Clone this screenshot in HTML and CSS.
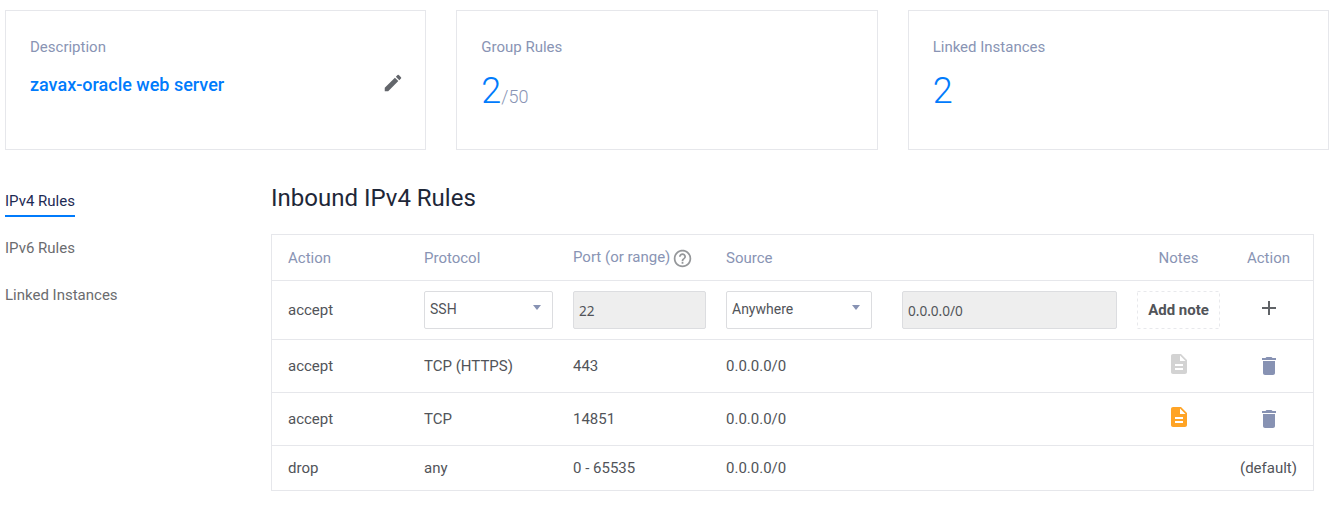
FILE: index.html
```html
<!DOCTYPE html>
<html lang="en">
<head>
<meta charset="utf-8">
<title>Firewall group</title>
<link rel="stylesheet" href="styles.css">
</head>
<body>
<section class="cards">
  <div class="card">
    <div class="label">Description</div>
    <div class="desc-row"><span class="desc">zavax-oracle web server</span>
      <svg class="edit" viewBox="0 0 24 24"><path d="M3 17.25V21h3.75L17.81 9.94l-3.75-3.75L3 17.25zM20.71 7.04a1 1 0 0 0 0-1.41l-2.34-2.34a1 1 0 0 0-1.41 0l-1.83 1.83 3.75 3.75 1.83-1.83z"/></svg>
    </div>
  </div>
  <div class="card">
    <div class="label">Group Rules</div>
    <div class="stat">2<span class="total">/50</span></div>
  </div>
  <div class="card">
    <div class="label">Linked Instances</div>
    <div class="stat">2</div>
  </div>
</section>
<div class="content">
  <nav class="side">
    <a class="active">IPv4 Rules</a>
    <a>IPv6 Rules</a>
    <a>Linked Instances</a>
  </nav>
  <main class="main">
    <h1>Inbound IPv4 Rules</h1>
    <div class="table">
      <div class="row head">
        <span>Action</span><span>Protocol</span>
        <span class="port">Port (or range)<svg class="help" viewBox="0 0 24 24"><path d="M11 18h2v-2h-2v2zm1-16C6.48 2 2 6.48 2 12s4.48 10 10 10 10-4.48 10-10S17.52 2 12 2zm0 18c-4.41 0-8-3.59-8-8s3.59-8 8-8 8 3.59 8 8-3.59 8-8 8zm0-14c-2.21 0-4 1.79-4 4h2c0-1.1.9-2 2-2s2 .9 2 2c0 2-3 1.75-3 5h2c0-2.25 3-2.5 3-5 0-2.21-1.79-4-4-4z"/></svg></span>
        <span>Source</span><span></span><span class="center">Notes</span><span class="center">Action</span>
      </div>
      <div class="row form">
        <span>accept</span>
        <div class="field select protocol">SSH<i class="caret"></i></div>
        <div class="field input port-input">22</div>
        <div class="field select source">Anywhere<i class="caret"></i></div>
        <div class="field input address">0.0.0.0/0</div>
        <div class="add-note"><svg class="dash"><rect x="0.5" y="0.5" width="82" height="37"/></svg>Add note</div>
        <svg class="icon plus" viewBox="0 0 24 24"><path d="M19 13h-6v6h-2v-6H5v-2h6V5h2v6h6v2z"/></svg>
      </div>
      <div class="row rule">
        <span>accept</span><span>TCP (HTTPS)</span><span>443</span><span>0.0.0.0/0</span><span></span>
        <svg class="icon note" viewBox="0 0 24 24"><path d="M14 2H6c-1.1 0-1.99.9-1.99 2L4 20c0 1.1.89 2 1.99 2H18c1.1 0 2-.9 2-2V8l-6-6zm2 16H8v-2h8v2zm0-4H8v-2h8v2zm-3-5V3.5L18.5 9H13z"/></svg>
        <svg class="icon trash" viewBox="0 0 24 24"><path d="M6 19c0 1.1.9 2 2 2h8c1.1 0 2-.9 2-2V7H6v12zM19 4h-3.5l-1-1h-5l-1 1H5v2h14V4z"/></svg>
      </div>
      <div class="row rule">
        <span>accept</span><span>TCP</span><span>14851</span><span>0.0.0.0/0</span><span></span>
        <svg class="icon note filled" viewBox="0 0 24 24"><path d="M14 2H6c-1.1 0-1.99.9-1.99 2L4 20c0 1.1.89 2 1.99 2H18c1.1 0 2-.9 2-2V8l-6-6zm2 16H8v-2h8v2zm0-4H8v-2h8v2zm-3-5V3.5L18.5 9H13z"/></svg>
        <svg class="icon trash" viewBox="0 0 24 24"><path d="M6 19c0 1.1.9 2 2 2h8c1.1 0 2-.9 2-2V7H6v12zM19 4h-3.5l-1-1h-5l-1 1H5v2h14V4z"/></svg>
      </div>
      <div class="row last">
        <span>drop</span><span>any</span><span>0 - 65535</span><span>0.0.0.0/0</span><span></span><span></span><span class="center">(default)</span>
      </div>
    </div>
  </main>
</div>
</body>
</html>
```
FILE: styles.css
```css
* { box-sizing: border-box; }
body { margin: 0; padding: 10px 8px 0 5px; background: #fff; color: #515459; font: 15px/20px Roboto, sans-serif; }
svg { display: block; flex: none; }
.cards { display: grid; grid-template-columns: repeat(3, 1fr); gap: 30px; }
.card { height: 140px; border: 1px solid #e6e7eb; padding: 26px 24px 0; }
.label { color: #8994b4; }
.desc-row { display: flex; justify-content: space-between; align-items: center; height: 22px; margin-top: 17px; }
.desc { color: #007bfc; font-size: 18px; font-weight: 500; }
.edit { width: 22px; height: 22px; margin: -5px -3px 0 0; fill: #63666b; }
.stat { margin-top: 12px; color: #007bfc; font-size: 36px; line-height: 44px; font-weight: 300; }
.total { color: #8994b4; font-size: 18px; }
.content { display: flex; margin-top: 30px; }
.side { width: 266px; display: flex; flex-direction: column; align-items: flex-start; gap: 20px; padding-top: 10px; color: #6b6c6f; }
.side a { height: 27px; padding-top: 1px; }
.side .active { color: #1d2a54; border-bottom: 2px solid #007bfc; }
.main { width: 1043px; }
h1 { margin: 3px 0 21px; color: #1e2738; font-size: 24px; line-height: 30px; font-weight: 400; }
.table { border: 1px solid #e6e7eb; }
.row { display: grid; grid-template-columns: 136px 149px 153px 176px 235px 83px 77px; align-items: center; padding: 0 16px; height: 53px; border-bottom: 1px solid #e6e7eb; }
.row > :last-child { margin-left: 20px; }
.head { height: 46px; padding-top: 1px; color: #8994b4; }
.center { text-align: center; }
.port { display: flex; align-items: center; gap: 2px; margin-top: -2px; }
.help { width: 21px; height: 21px; margin-top: 2px; fill: #95979a; }
.form { height: 59px; }
.field { height: 38px; border: 1px solid #dcdde0; border-radius: 2px; padding: 0 5px; font-size: 14px; line-height: 35px; }
.select { display: flex; justify-content: space-between; align-items: center; padding-right: 11px; padding-bottom: 1px; }
.caret { border: 4.5px solid transparent; border-top: 5px solid #8792b3; border-bottom: 0; margin-top: -4px; }
.protocol { width: 129px; }
.port-input { width: 133px; }
.source { width: 146px; }
.address { width: 215px; }
.input { background: #eee; font-family: "Noto Sans", sans-serif; font-size: 13.6px; line-height: 38px; }
.add-note { position: relative; height: 38px; line-height: 38px; text-align: center; font-weight: 700; }
.dash { position: absolute; inset: 0; width: 83px; height: 38px; fill: none; stroke: #e8e9ec; stroke-dasharray: 3 3; }
.icon { width: 24px; height: 24px; justify-self: center; }
.plus { margin-top: -4px; fill: #606367; }
.note { margin-top: -4px; fill: #d3d3d3; }
.filled { fill: #ffa426; }
.trash { fill: #8792b3; }
.last { height: 44px; border: 0; }
```
